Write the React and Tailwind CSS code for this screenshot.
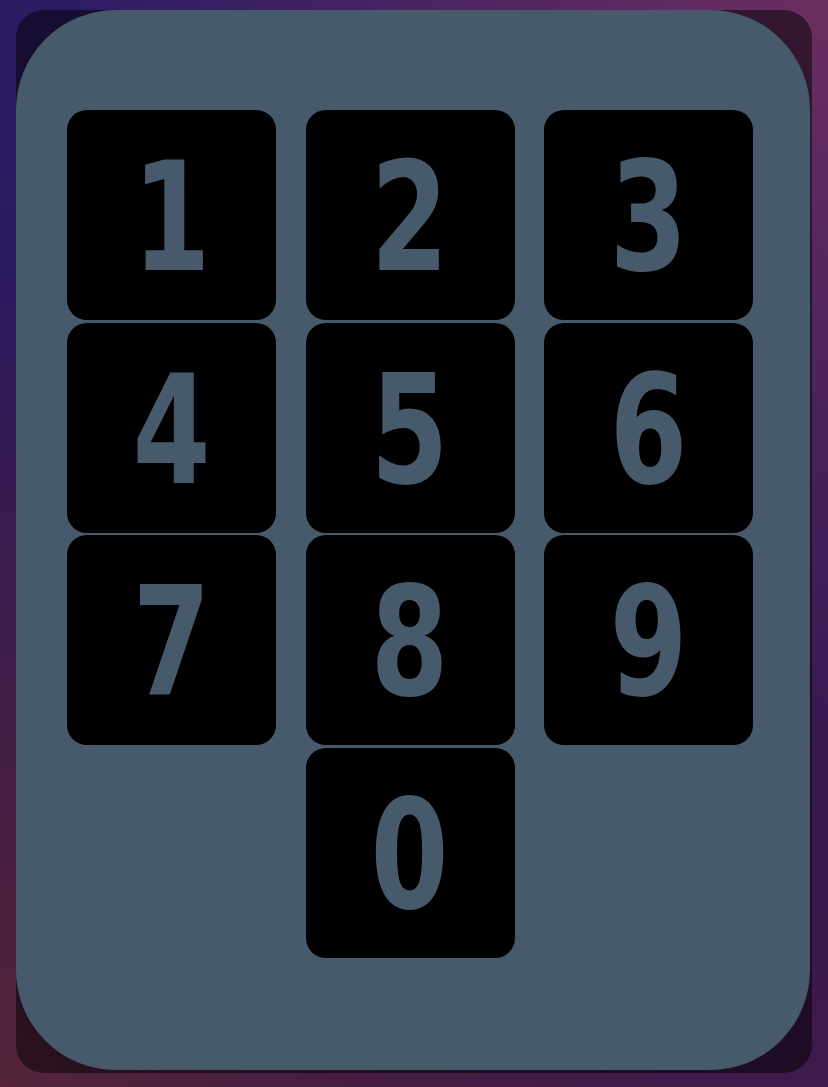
import React from 'react';

const keys = ['1', '2', '3', '4', '5', '6', '7', '8', '9'];

function Key({ label, className = '' }) {
  return (
    <button
      className={`flex h-[210px] w-[209px] items-center justify-center rounded-[20px] bg-black pt-[6px] ${className}`}
    >
      <span
        className="inline-block scale-x-[0.82] text-[152px] font-bold leading-none text-[#475a6b]"
        style={{ fontFamily: '"DejaVu Sans Condensed", "DejaVu Sans", sans-serif' }}
      >
        {label}
      </span>
    </button>
  );
}

export default function App() {
  return (
    <div className="h-[1087px] w-full overflow-hidden bg-[radial-gradient(circle_at_100%_0%,#6c2e5f,transparent_55%),radial-gradient(circle_at_0%_100%,#55243a,transparent_60%),radial-gradient(circle_at_100%_100%,#3f1a4c,transparent_60%),linear-gradient(#2d1c64,#28134d)] px-4 pt-[10px]">
      <div className="h-[1063px] w-[796px] rounded-[28px] bg-black/50">
        <div className="h-[1060px] w-[794px] rounded-[100px] bg-[#475a6b] pl-[51px] pt-[100px]">
          <div className="grid grid-cols-[209px_209px_209px] gap-x-[29.5px] gap-y-[2.5px]">
            {keys.map((k) => (
              <Key key={k} label={k} />
            ))}
            <Key label="0" className="col-start-2" />
          </div>
        </div>
      </div>
    </div>
  );
}
